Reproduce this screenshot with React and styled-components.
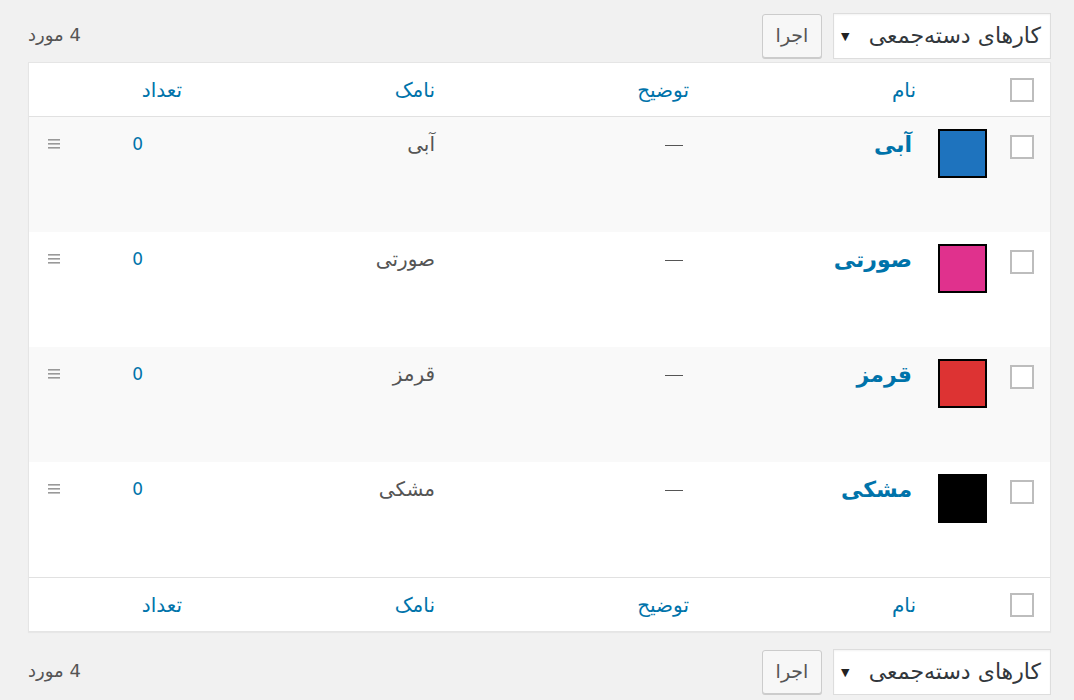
import React from "react";
import styled, { createGlobalStyle } from "styled-components";

const GlobalStyle = createGlobalStyle`
  html, body {
    margin: 0;
    padding: 0;
    background: #f1f1f1;
  }
  body {
    font-family: "DejaVu Sans", "Noto Sans", sans-serif;
    color: #444;
  }
`;

const Page = styled.div`
  direction: rtl;
  width: 1074px;
  height: 700px;
  box-sizing: border-box;
  padding: 13px 23px 0 28px;
  overflow: hidden;
`;

const NavBar = styled.div`
  display: flex;
  align-items: center;
  justify-content: space-between;
  height: 46px;
  margin: ${(p) => (p.bottom ? "17px 0 0" : "0 0 3px")};
`;

const Actions = styled.div`
  display: flex;
  align-items: center;
  gap: 11px;
`;

const Select = styled.div`
  width: 218px;
  height: 46px;
  box-sizing: border-box;
  border: 1px solid #ddd;
  background: #fff;
  display: flex;
  align-items: center;
  justify-content: space-between;
  padding: 0 9px 2px 7px;
  font-size: 22px;
  color: #32373c;
  box-shadow: inset 0 1px 2px rgba(0, 0, 0, 0.05);
`;

const Arrow = styled.span`
  font-size: 11px;
  color: #222;
  padding-top: 3px;
`;

const Button = styled.div`
  width: 60px;
  height: 44px;
  box-sizing: border-box;
  border: 1px solid #ccc;
  border-radius: 3px;
  background: #f7f7f7;
  box-shadow: 0 1px 0 #ccc;
  display: flex;
  align-items: center;
  justify-content: center;
  font-size: 19px;
  color: #555;
  padding-bottom: 2px;
`;

const Count = styled.div`
  font-size: 18px;
  color: #555;
  margin-top: -4px;
`;

const Table = styled.div`
  border: 1px solid #e5e5e5;
  background: #fff;
  box-shadow: 0 1px 1px rgba(0, 0, 0, 0.04);
`;

const Row = styled.div`
  display: grid;
  grid-template-columns: 52px 72px 226px 254px 253px 1fr;
  height: ${(p) => (p.head ? "53px" : "115px")};
  align-items: ${(p) => (p.head ? "center" : "start")};
  background: ${(p) => (p.alt ? "#f9f9f9" : "#fff")};
  border-bottom: ${(p) => (p.divider ? "1px solid #e1e1e1" : "none")};
  border-top: ${(p) => (p.topline ? "1px solid #e1e1e1" : "none")};
`;

const Cell = styled.div`
  padding-right: ${(p) => p.pr ?? 11}px;
  padding-top: ${(p) => p.pt ?? 0}px;
  min-height: 26px;
  font-size: ${(p) => (p.bold ? 22 : p.num ? 17 : 20)}px;
  font-weight: ${(p) => (p.bold ? 700 : 400)};
  color: ${(p) => p.color || "#555"};
  display: flex;
  align-items: center;
  justify-content: ${(p) => (p.end ? "space-between" : "flex-start")};
  line-height: 26px;
`;

const Check = styled.span`
  display: block;
  width: 24px;
  height: 24px;
  box-sizing: border-box;
  border: 2px solid #bdbdbd;
  background: #fff;
`;

const Swatch = styled.span`
  display: block;
  width: 49px;
  height: 49px;
  box-sizing: border-box;
  border: 2px solid #000;
  background: ${(p) => p.color};
`;

const Dash = styled.span`
  display: block;
  width: 18px;
  height: 1px;
  background: #555;
  margin-top: 2px;
`;

const Handle = () => (
  <svg width="16" height="12" viewBox="0 0 16 12">
    <rect x="2" y="1" width="12" height="1.6" fill="#999" />
    <rect x="2" y="5" width="12" height="1.6" fill="#999" />
    <rect x="2" y="9" width="12" height="1.6" fill="#999" />
  </svg>
);

const HandleWrap = styled.span`
  margin-left: 17px;
  display: flex;
`;

const LINK = "#0073aa";

const terms = [
  { name: "آبی", color: "#1e73be" },
  { name: "صورتی", color: "#e0318d" },
  { name: "قرمز", color: "#dd3333" },
  { name: "مشکی", color: "#000000" },
];

const HeadRow = ({ foot }) => (
  <Row head divider={!foot} topline={foot}>
    <Cell pr={16}>
      <Check />
    </Cell>
    <Cell />
    <Cell color={LINK} pr={10}>نام</Cell>
    <Cell color={LINK}>توضیح</Cell>
    <Cell color={LINK}>نامک</Cell>
    <Cell color={LINK}>تعداد</Cell>
  </Row>
);

const Nav = ({ bottom }) => (
  <NavBar bottom={bottom}>
    <Actions>
      <Select>
        <span>کارهای دسته‌جمعی</span>
        <Arrow>▼</Arrow>
      </Select>
      <Button>اجرا</Button>
    </Actions>
    <Count>4 مورد</Count>
  </NavBar>
);

export default function App() {
  return (
    <>
      <GlobalStyle />
      <Page>
        <Nav />
        <Table>
          <HeadRow />
          {terms.map((t, i) => (
            <Row key={t.name} alt={i % 2 === 0}>
              <Cell pr={16} pt={17}>
                <Check />
              </Cell>
              <Cell pt={12}>
                <Swatch color={t.color} />
              </Cell>
              <Cell bold color={LINK} pr={14} pt={15}>
                {t.name}
              </Cell>
              <Cell pt={14} pr={17}>
                <Dash />
              </Cell>
              <Cell pt={14}>{t.name}</Cell>
              <Cell num pt={14} pr={50} color={LINK} end>
                <span>0</span>
                <HandleWrap>
                  <Handle />
                </HandleWrap>
              </Cell>
            </Row>
          ))}
          <HeadRow foot />
        </Table>
        <Nav bottom />
      </Page>
    </>
  );
}
